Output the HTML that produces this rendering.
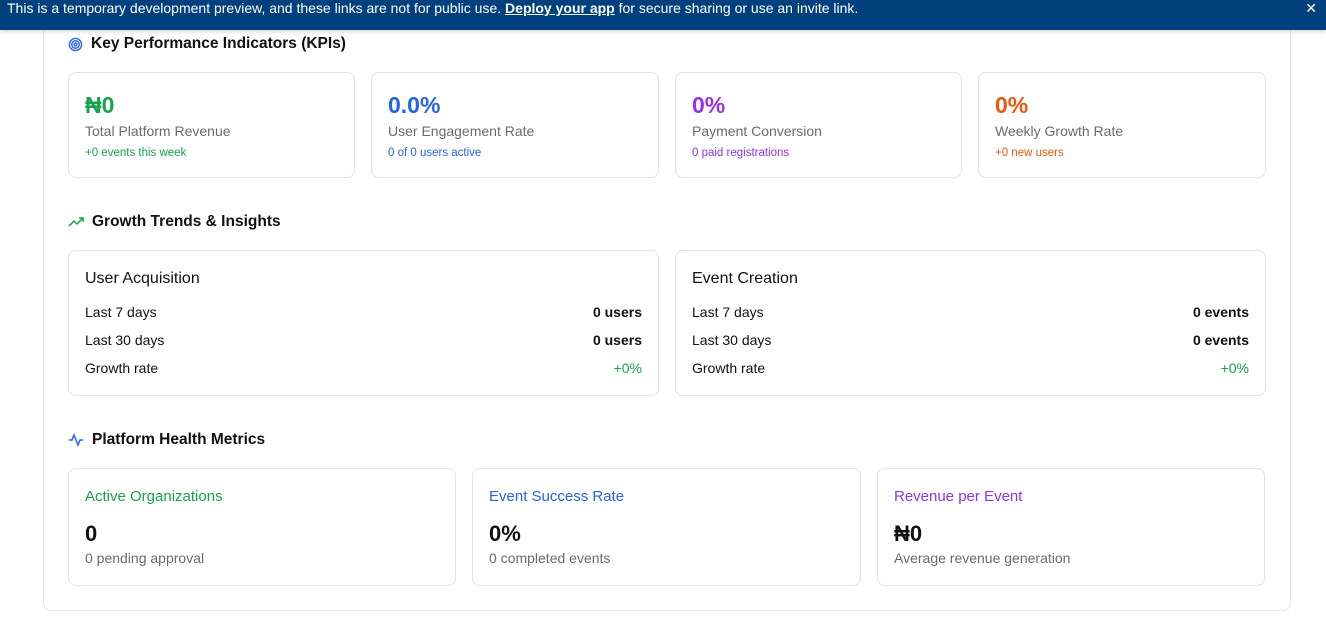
<!DOCTYPE html>
<html><head><meta charset="utf-8"><style>
*{box-sizing:border-box;margin:0;padding:0}
body{width:1326px;height:618px;overflow:hidden;background:#fff;font-family:"Liberation Sans",sans-serif;color:#111;position:relative}
.banner{position:absolute;left:0;top:0;width:1326px;height:30px;background:#00417d;color:#fff;font-size:14px;line-height:16px;padding:0 7px;box-shadow:0 2px 4px rgba(0,0,0,.15);z-index:2}
.banner a{color:#fff;font-weight:bold;text-decoration:underline}
.banner .x{position:absolute;right:9px;top:0;font-size:14px}
.outer{position:absolute;left:43px;top:0;width:1248px;height:611px;border:1px solid #e3e3e3;border-top:none;border-radius:0 0 8px 8px}
.h{position:absolute;left:68px;font-size:15.5px;font-weight:bold;display:flex;align-items:center;gap:8px}
.card{position:absolute;border:1px solid #e2e2e2;border-radius:8px;background:#fff}
.kpi .v{position:absolute;left:16px;top:19px;font-size:23px;font-weight:bold}
.kpi .l{position:absolute;left:16px;top:50px;font-size:14px;color:#6b6b6b}
.kpi .s{position:absolute;left:16px;top:74px;font-size:11.5px}
.g .t{position:absolute;left:16px;top:19px;font-size:16px}
.row{position:absolute;left:16px;right:16px;font-size:14px;display:flex;justify-content:space-between}
.row b{font-weight:bold}
.hm .t{position:absolute;left:16px;top:19px;font-size:15px}
.hm .v{position:absolute;left:16px;top:52px;font-size:22px;font-weight:bold}
.hm .s{position:absolute;left:16px;top:81px;font-size:14px;color:#6b6b6b}
</style></head><body>
<div class="banner">This is a temporary development preview, and these links are not for public use. <a>Deploy your app</a> for secure sharing or use an invite link.<span class="x">✕</span></div>
<div class="outer"></div>

<div class="h" style="top:35px"><svg width="15" height="15" viewBox="0 0 16 16" fill="none" stroke="#2563eb" stroke-width="1.5"><circle cx="8" cy="8" r="6.5"/><circle cx="8" cy="8" r="4"/><circle cx="8" cy="8" r="1.5"/></svg>Key Performance Indicators (KPIs)</div>

<div class="card kpi" style="left:68px;top:72px;width:287px;height:106px"><div class="v" style="color:#16a34a">₦0</div><div class="l">Total Platform Revenue</div><div class="s" style="color:#16a34a">+0 events this week</div></div>
<div class="card kpi" style="left:371px;top:72px;width:288px;height:106px"><div class="v" style="color:#2563eb">0.0%</div><div class="l">User Engagement Rate</div><div class="s" style="color:#2563eb">0 of 0 users active</div></div>
<div class="card kpi" style="left:675px;top:72px;width:287px;height:106px"><div class="v" style="color:#9333ea">0%</div><div class="l">Payment Conversion</div><div class="s" style="color:#9333ea">0 paid registrations</div></div>
<div class="card kpi" style="left:978px;top:72px;width:288px;height:106px"><div class="v" style="color:#ea580c">0%</div><div class="l">Weekly Growth Rate</div><div class="s" style="color:#ea580c">+0 new users</div></div>

<div class="h" style="top:213px"><svg width="16" height="12" viewBox="0 0 16 12" fill="none" stroke="#16a34a" stroke-width="1.5"><path d="M1 10l5-5 3 3 6-6M11 2h4v4"/></svg>Growth Trends &amp; Insights</div>

<div class="card g" style="left:68px;top:250px;width:591px;height:146px"><div class="t">User Acquisition</div>
<div class="row" style="top:53px"><span>Last 7 days</span><b>0 users</b></div>
<div class="row" style="top:81px"><span>Last 30 days</span><b>0 users</b></div>
<div class="row" style="top:109px"><span>Growth rate</span><span style="color:#16a34a">+0%</span></div></div>
<div class="card g" style="left:675px;top:250px;width:591px;height:146px"><div class="t">Event Creation</div>
<div class="row" style="top:53px"><span>Last 7 days</span><b>0 events</b></div>
<div class="row" style="top:81px"><span>Last 30 days</span><b>0 events</b></div>
<div class="row" style="top:109px"><span>Growth rate</span><span style="color:#16a34a">+0%</span></div></div>

<div class="h" style="top:431px"><svg width="16" height="16" viewBox="0 0 16 16" fill="none" stroke="#2563eb" stroke-width="1.5"><path d="M1 8h3l2-5 4 10 2-5h3"/></svg>Platform Health Metrics</div>

<div class="card hm" style="left:68px;top:468px;width:388px;height:118px"><div class="t" style="color:#16a34a">Active Organizations</div><div class="v">0</div><div class="s">0 pending approval</div></div>
<div class="card hm" style="left:472px;top:468px;width:389px;height:118px"><div class="t" style="color:#2563eb">Event Success Rate</div><div class="v">0%</div><div class="s">0 completed events</div></div>
<div class="card hm" style="left:877px;top:468px;width:388px;height:118px"><div class="t" style="color:#9333ea">Revenue per Event</div><div class="v">₦0</div><div class="s">Average revenue generation</div></div>
</body></html>
